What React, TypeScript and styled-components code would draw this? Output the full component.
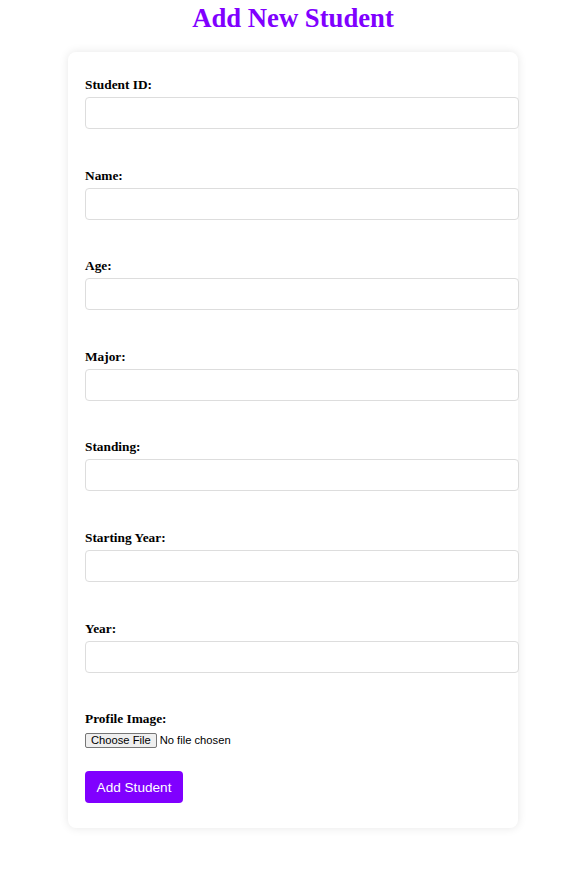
import React from 'react';
import styled, { createGlobalStyle } from 'styled-components';

const GlobalStyle = createGlobalStyle`
  html, body {
    margin: 0;
    padding: 0;
    background: #ffffff;
  }
  body {
    font-family: "Liberation Serif", "Times New Roman", serif;
  }
`;

const Page = styled.div`
  display: flex;
  flex-direction: column;
  align-items: center;
  padding-left: 25px;
  padding-bottom: 40px;
`;

const Title = styled.h2`
  margin: 3px 0 18px 0;
  font-size: 26.7px;
  font-weight: bold;
  color: #8000ff;
  font-family: "Liberation Serif", "Times New Roman", serif;
`;

const Card = styled.div`
  width: 450px;
  box-sizing: border-box;
  padding: 25px 17px 25px;
  background: #ffffff;
  border-radius: 8px;
  box-shadow: 0 0 10px rgba(0, 0, 0, 0.1);
`;

const Form = styled.form`
  display: flex;
  flex-direction: column;
  align-items: flex-start;
`;

const Field = styled.div<{ gap?: number }>`
  display: flex;
  flex-direction: column;
  align-items: flex-start;
  width: 100%;
  margin-bottom: ${({ gap }) => gap ?? 38.6}px;
`;

const Label = styled.label`
  display: block;
  font-size: 13.33px;
  font-weight: bold;
  color: #000000;
  margin-bottom: 4px;
`;

const TextInput = styled.input`
  width: 100%;
  height: 14px;
  padding: 8px;
  border: 1px solid #dddddd;
  border-radius: 4px;
  font-family: "Liberation Sans", Arial, sans-serif;
  font-size: 13.33px;
  outline: none;
  background: #ffffff;
`;

const FileInput = styled.input`
  font-family: "Liberation Sans", Arial, sans-serif;
  font-size: 11.2px;
  color: #000000;
  margin-top: 2px;

  &::file-selector-button {
    font-family: "Liberation Sans", Arial, sans-serif;
    font-size: 11.2px;
    line-height: 11px;
    padding: 1px 5px;
    margin-right: 3px;
    border: 1px solid #767676;
    border-radius: 2px;
    background: #efefef;
    color: #000000;
  }
`;

const SubmitButton = styled.button`
  width: 98px;
  height: 32px;
  padding: 0;
  border: none;
  border-radius: 4px;
  background: #8000ff;
  color: #ffffff;
  font-family: "Liberation Sans", Arial, sans-serif;
  font-size: 13.6px;
  cursor: pointer;
`;

const fields = [
  { id: 'studentId', label: 'Student ID:' },
  { id: 'name', label: 'Name:' },
  { id: 'age', label: 'Age:' },
  { id: 'major', label: 'Major:' },
  { id: 'standing', label: 'Standing:' },
  { id: 'startingYear', label: 'Starting Year:' },
  { id: 'year', label: 'Year:' },
];

const App = () => (
  <>
    <GlobalStyle />
    <Page>
      <Title>Add New Student</Title>
      <Card>
        <Form onSubmit={(e) => e.preventDefault()}>
          {fields.map((field) => (
            <Field key={field.id}>
              <Label htmlFor={field.id}>{field.label}</Label>
              <TextInput id={field.id} type="text" />
            </Field>
          ))}
          <Field gap={23}>
            <Label htmlFor="profileImage">Profile Image:</Label>
            <FileInput id="profileImage" type="file" />
          </Field>
          <SubmitButton type="submit">Add Student</SubmitButton>
        </Form>
      </Card>
    </Page>
  </>
);

export default App;
